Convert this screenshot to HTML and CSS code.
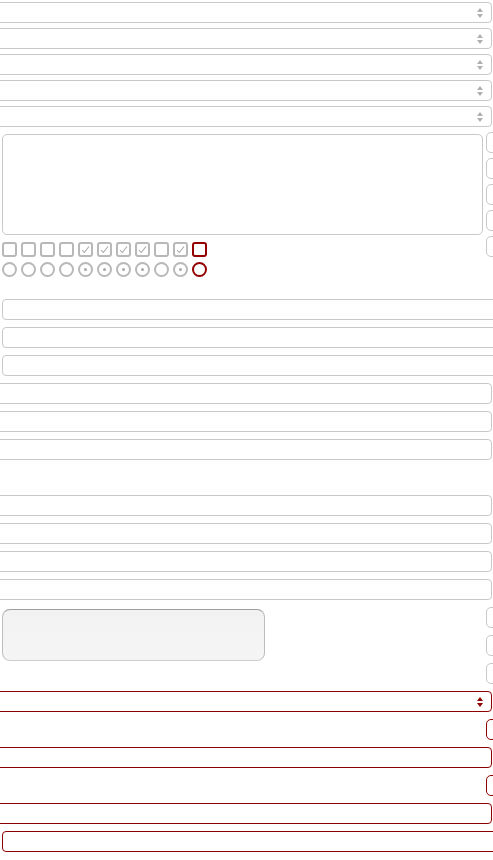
FILE: index.html
```html
<!DOCTYPE html>
<html>
<head>
<meta charset="utf-8">
<link rel="stylesheet" href="styles.css">
</head>
<body>
<div class="page">
  <div class="sel"><span class="arrows"><i class="up"></i><i class="down"></i></span></div>
  <div class="sel"><span class="arrows"><i class="up"></i><i class="down"></i></span></div>
  <div class="sel"><span class="arrows"><i class="up"></i><i class="down"></i></span></div>
  <div class="sel"><span class="arrows"><i class="up"></i><i class="down"></i></span></div>
  <div class="sel"><span class="arrows"><i class="up"></i><i class="down"></i></span></div>

  <div class="split">
    <div class="leftcol">
      <div class="textarea"></div>
      <div class="checks">
        <span class="cb"></span><span class="cb"></span><span class="cb"></span><span class="cb"></span>
        <span class="cb on"><svg viewBox="0 0 11 11"><polyline points="2,6 4.3,8.5 9,2.5"/></svg></span>
        <span class="cb on"><svg viewBox="0 0 11 11"><polyline points="2,6 4.3,8.5 9,2.5"/></svg></span>
        <span class="cb on"><svg viewBox="0 0 11 11"><polyline points="2,6 4.3,8.5 9,2.5"/></svg></span>
        <span class="cb on"><svg viewBox="0 0 11 11"><polyline points="2,6 4.3,8.5 9,2.5"/></svg></span>
        <span class="cb"></span>
        <span class="cb on"><svg viewBox="0 0 11 11"><polyline points="2,6 4.3,8.5 9,2.5"/></svg></span>
        <span class="cb red"></span>
      </div>
      <div class="checks radios">
        <span class="rd"></span><span class="rd"></span><span class="rd"></span><span class="rd"></span>
        <span class="rd on"></span><span class="rd on"></span><span class="rd on"></span><span class="rd on"></span>
        <span class="rd"></span><span class="rd on"></span>
        <span class="rd red"></span>
      </div>
    </div>
    <div class="rightcol">
      <div class="stub"></div><div class="stub"></div><div class="stub"></div><div class="stub"></div><div class="stub"></div>
    </div>
  </div>

  <div class="group g1">
    <div class="inr"></div>
    <div class="inr"></div>
    <div class="inr"></div>
    <div class="inl"></div>
    <div class="inl"></div>
    <div class="inl"></div>
  </div>

  <div class="group g2">
    <div class="inl"></div>
    <div class="inl"></div>
    <div class="inl"></div>
    <div class="inl"></div>
  </div>

  <div class="btnrow">
    <div class="button"></div>
    <div class="rightcol wide">
      <div class="stub"></div><div class="stub"></div><div class="stub"></div>
    </div>
  </div>

  <div class="group g3">
    <div class="sel red"><span class="arrows"><i class="up"></i><i class="down"></i></span></div>
    <div class="stubrow"><div class="stub red"></div></div>
    <div class="inl red"></div>
    <div class="stubrow"><div class="stub red"></div></div>
    <div class="inl red"></div>
    <div class="inr red"></div>
  </div>
</div>
</body>
</html>
```

FILE: styles.css
```css
html, body {
  margin: 0;
  padding: 0;
  background: #fff;
  font-family: "Liberation Sans", Arial, sans-serif;
}
body {
  overflow: hidden;
  width: 493px;
  height: 860px;
}
.page {
  width: 493px;
  padding-top: 2px;
  overflow: hidden;
}

/* selects overflowing to the left */
.sel {
  box-sizing: border-box;
  position: relative;
  width: 600px;
  height: 21px;
  margin-left: -108px;
  margin-bottom: 5px;
  border: 1px solid #c9c9c9;
  border-radius: 4px;
  background: #fff;
}
.arrows {
  position: absolute;
  right: 7px;
  top: 5px;
  width: 7px;
  height: 11px;
}
.arrows i {
  position: absolute;
  left: 0;
  width: 0;
  height: 0;
  border-left: 3.5px solid transparent;
  border-right: 3.5px solid transparent;
}
.arrows .up {
  top: 0;
  border-bottom: 4px solid #b0b0b0;
}
.arrows .down {
  top: 6px;
  border-top: 4px solid #b0b0b0;
}
.sel.red {
  border-color: #8f0000;
  margin-bottom: 7px;
}
.sel.red .arrows .up { border-bottom-color: #8f0000; }
.sel.red .arrows .down { border-top-color: #8f0000; }

/* textarea + right stubs */
.split {
  display: flex;
  align-items: flex-start;
  margin-top: 1px;
}
.leftcol {
  margin-left: 2px;
  width: 481px;
}
.textarea {
  box-sizing: border-box;
  margin-top: 2px;
  width: 481px;
  height: 101px;
  border: 1px solid #c9c9c9;
  border-radius: 5px;
}
.checks {
  display: flex;
  gap: 4px;
  margin-top: 7px;
}
.checks.radios {
  margin-top: 5px;
}
.cb, .rd {
  box-sizing: border-box;
  width: 15px;
  height: 15px;
  border: 2px solid #b8b8b8;
  border-radius: 3px;
  display: flex;
  align-items: center;
  justify-content: center;
}
.cb svg {
  width: 11px;
  height: 11px;
}
.cb svg polyline {
  fill: none;
  stroke: #a9a9a9;
  stroke-width: 1.1;
}
.rd {
  border-radius: 50%;
}
.rd.on::after {
  content: "";
  width: 3px;
  height: 3px;
  border-radius: 50%;
  background: #a9a9a9;
}
.cb.red, .rd.red {
  border-color: #940000;
}
.rightcol {
  margin-left: 3px;
  display: flex;
  flex-direction: column;
  gap: 5px;
}
.rightcol.wide {
  gap: 7px;
  margin-left: auto;
  width: 7px;
}
.stub {
  box-sizing: border-box;
  width: 60px;
  height: 21px;
  border: 1px solid #c9c9c9;
  border-radius: 5px;
  flex: none;
}
.stubrow {
  display: flex;
  justify-content: flex-end;
  width: 493px;
  overflow: hidden;
  margin-bottom: 7px;
}
.stubrow .stub {
  margin-right: -53px;
}
.stub.red {
  border-color: #8f0000;
}

/* text inputs */
.group {
  display: flex;
  flex-direction: column;
  gap: 7px;
}
.g1 { margin-top: 22px; }
.g2 { margin-top: 35px; }
.g3 { margin-top: 7px; gap: 0; }
.inr, .inl {
  box-sizing: border-box;
  width: 600px;
  height: 21px;
  border: 1px solid #c9c9c9;
  border-radius: 4px;
  flex: none;
}
.inr {
  margin-left: 2px;
}
.inl {
  margin-left: -108px;
}
.inr.red, .inl.red {
  border-color: #8f0000;
}
.g3 .inl {
  margin-bottom: 7px;
}

/* button row */
.btnrow {
  display: flex;
  align-items: flex-start;
  margin-top: 7px;
  width: 493px;
  overflow: hidden;
}
.button {
  box-sizing: border-box;
  margin-left: 2px;
  margin-top: 2px;
  width: 263px;
  height: 52px;
  background: linear-gradient(#f2f2f2, #f5f5f5);
  border: 1px solid #cdcdcd;
  border-top-color: #9e9e9e;
  border-left-color: #bdbdbd;
  border-right-color: #bdbdbd;
  border-radius: 8px;
}
.rightcol.wide .stub {
  margin-left: 0;
}
```
